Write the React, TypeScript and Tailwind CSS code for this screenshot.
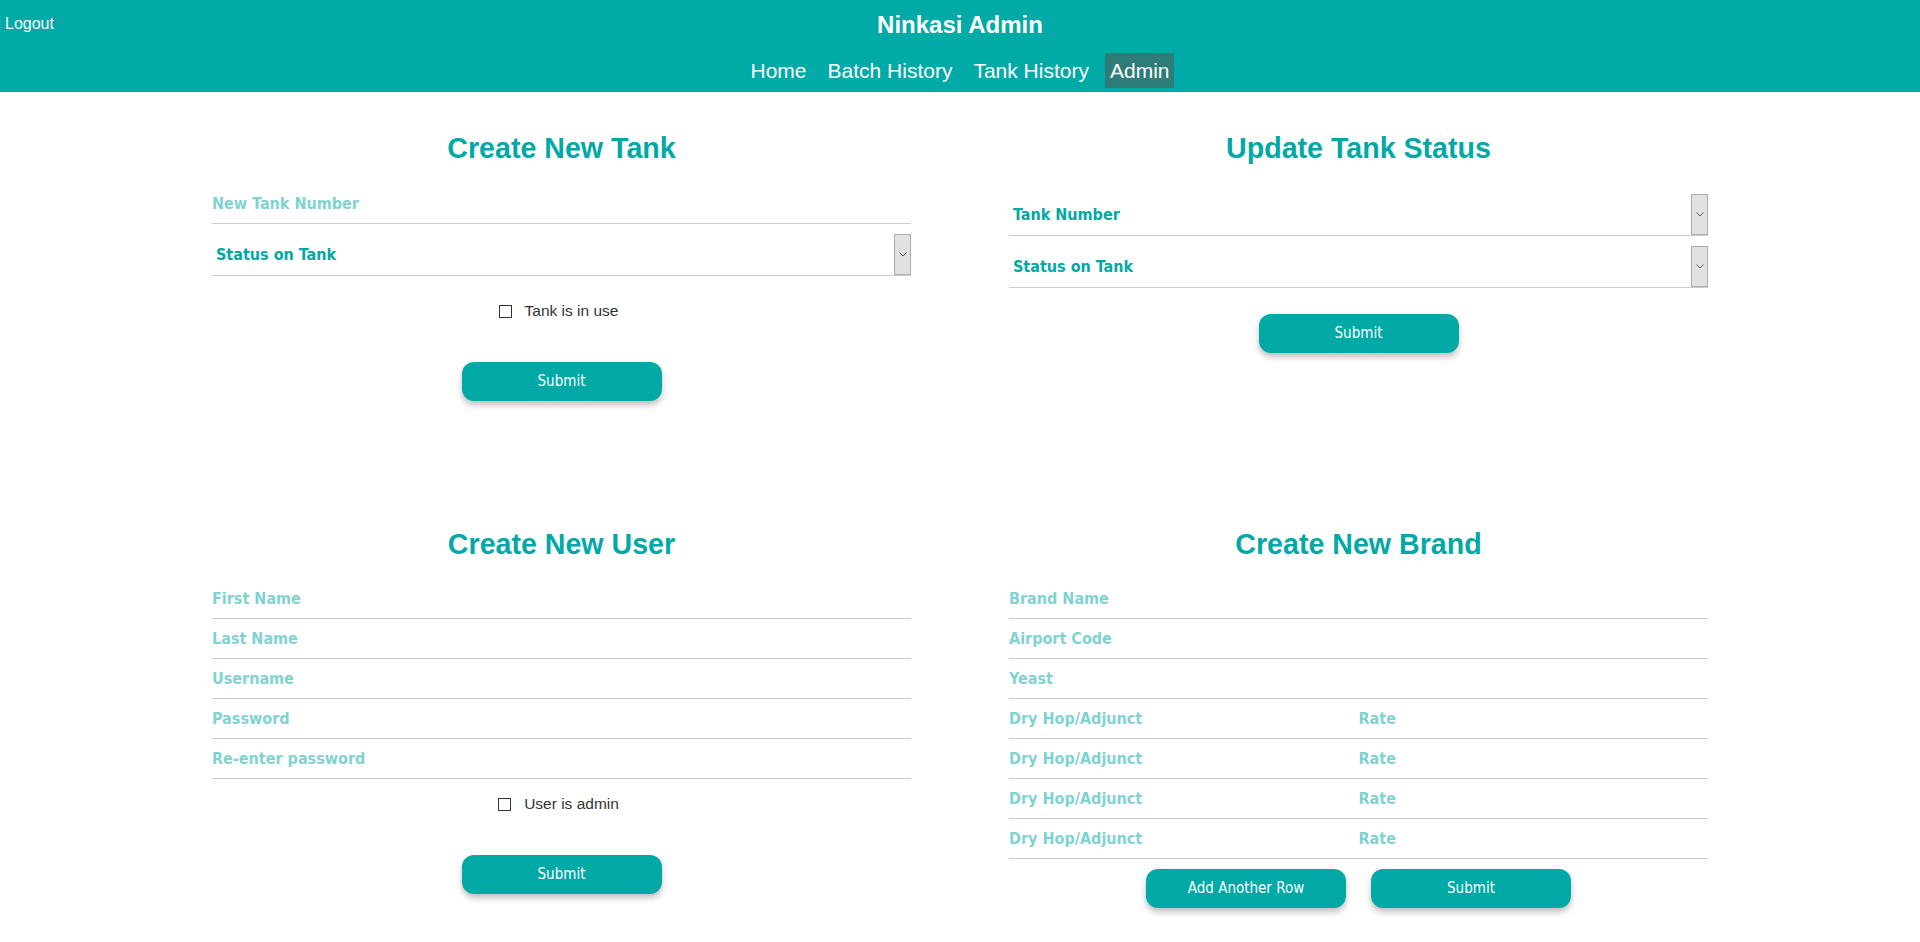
import React from 'react';

const labelFont = "font-['DejaVu_Sans_Condensed','DejaVu_Sans',sans-serif]";

const NavLink: React.FC<{ label: string; active?: boolean }> = ({ label, active }) => (
  <a
    href="#"
    className={
      'h-[35px] flex items-center px-[5px] text-[21px] text-white ' +
      (active ? 'bg-[#2d7c78]' : '')
    }
  >
    {label}
  </a>
);

const TextField: React.FC<{ placeholder: string }> = ({ placeholder }) => (
  <input
    type="text"
    placeholder={placeholder}
    className={`${labelFont} block w-full h-[40px] border-b border-[#cccccc] bg-transparent p-0 text-[16px] font-bold text-[#00a9a5] outline-none placeholder:text-[#7fd3d0]`}
  />
);

const SelectField: React.FC<{ label: string }> = ({ label }) => (
  <div className="mt-[10px] flex h-[42px] items-stretch border-b border-[#cccccc]">
    <span className={`${labelFont} flex-1 flex items-center pl-[4px] text-[16px] font-bold text-[#00a9a5]`}>
      {label}
    </span>
    <span className="w-[17px] flex items-center justify-center border border-[#adadad] bg-[#e1e1e1]">
      <svg width="8" height="5" viewBox="0 0 8 5" fill="none">
        <path d="M0.5 0.5 L4 4 L7.5 0.5" stroke="#5f5f5f" strokeWidth="1" />
      </svg>
    </span>
  </div>
);

const CheckRow: React.FC<{ label: string; className?: string }> = ({ label, className }) => (
  <label className={`flex h-[18px] items-center justify-center gap-[13px] pr-[6px] ${className ?? ''}`}>
    <span className="w-[13px] h-[13px] border border-[#333333] bg-white" />
    <span className="text-[15.5px] text-[#333333]">{label}</span>
  </label>
);

const Button: React.FC<{ children: React.ReactNode }> = ({ children }) => (
  <button
    type="button"
    className={`${labelFont} w-[200px] h-[39px] rounded-[12px] bg-[#00a9a5] text-[15px] text-white shadow-[0_4px_6px_rgba(0,0,0,0.25)]`}
  >
    {children}
  </button>
);

const Title: React.FC<{ children: React.ReactNode }> = ({ children }) => (
  <h2 className="text-center text-[28.6px] leading-[32px] font-bold text-[#00a9a5]">{children}</h2>
);

export default function App() {
  return (
    <div className="min-h-screen bg-white font-['Liberation_Sans',Arial,sans-serif]">
      <header className="bg-[#00aaa6] pt-[11px] pb-[4px] text-white">
        <div className="grid grid-cols-[1fr_auto_1fr] items-start">
          <a href="#" className="mt-[4px] pl-[5px] text-[16px] leading-[18px]">
            Logout
          </a>
          <h1 className="text-[24px] leading-[28px] font-bold">Ninkasi Admin</h1>
          <div />
        </div>
        <nav className="mt-[14px] flex justify-center gap-[11px]">
          <NavLink label="Home" />
          <NavLink label="Batch History" />
          <NavLink label="Tank History" />
          <NavLink label="Admin" active />
        </nav>
      </header>

      <main className="mx-auto grid w-[1496px] grid-cols-2 gap-x-[98px] gap-y-[127px] pt-[40px] pb-[30px]">
        <section className="flex flex-col">
          <Title>Create New Tank</Title>
          <div className="mt-[20px]">
            <TextField placeholder="New Tank Number" />
            <SelectField label="Status on Tank" />
          </div>
          <CheckRow label="Tank is in use" className="mt-[26px]" />
          <div className="mt-[42px] flex justify-center">
            <Button>Submit</Button>
          </div>
        </section>

        <section className="flex flex-col">
          <Title>Update Tank Status</Title>
          <div className="mt-[20px]">
            <SelectField label="Tank Number" />
            <SelectField label="Status on Tank" />
          </div>
          <div className="mt-[26px] flex justify-center">
            <Button>Submit</Button>
          </div>
        </section>

        <section className="flex flex-col">
          <Title>Create New User</Title>
          <div className="mt-[19px]">
            <TextField placeholder="First Name" />
            <TextField placeholder="Last Name" />
            <TextField placeholder="Username" />
            <TextField placeholder="Password" />
            <TextField placeholder="Re-enter password" />
          </div>
          <CheckRow label="User is admin" className="mt-[16px]" />
          <div className="mt-[42px] flex justify-center">
            <Button>Submit</Button>
          </div>
        </section>

        <section className="flex flex-col">
          <Title>Create New Brand</Title>
          <div className="mt-[19px]">
            <TextField placeholder="Brand Name" />
            <TextField placeholder="Airport Code" />
            <TextField placeholder="Yeast" />
            {[0, 1, 2, 3].map((i) => (
              <div key={i} className="grid grid-cols-2">
                <TextField placeholder="Dry Hop/Adjunct" />
                <TextField placeholder="Rate" />
              </div>
            ))}
          </div>
          <div className="mt-[10px] flex justify-center gap-[25px]">
            <Button>Add Another Row</Button>
            <Button>Submit</Button>
          </div>
        </section>
      </main>
    </div>
  );
}
